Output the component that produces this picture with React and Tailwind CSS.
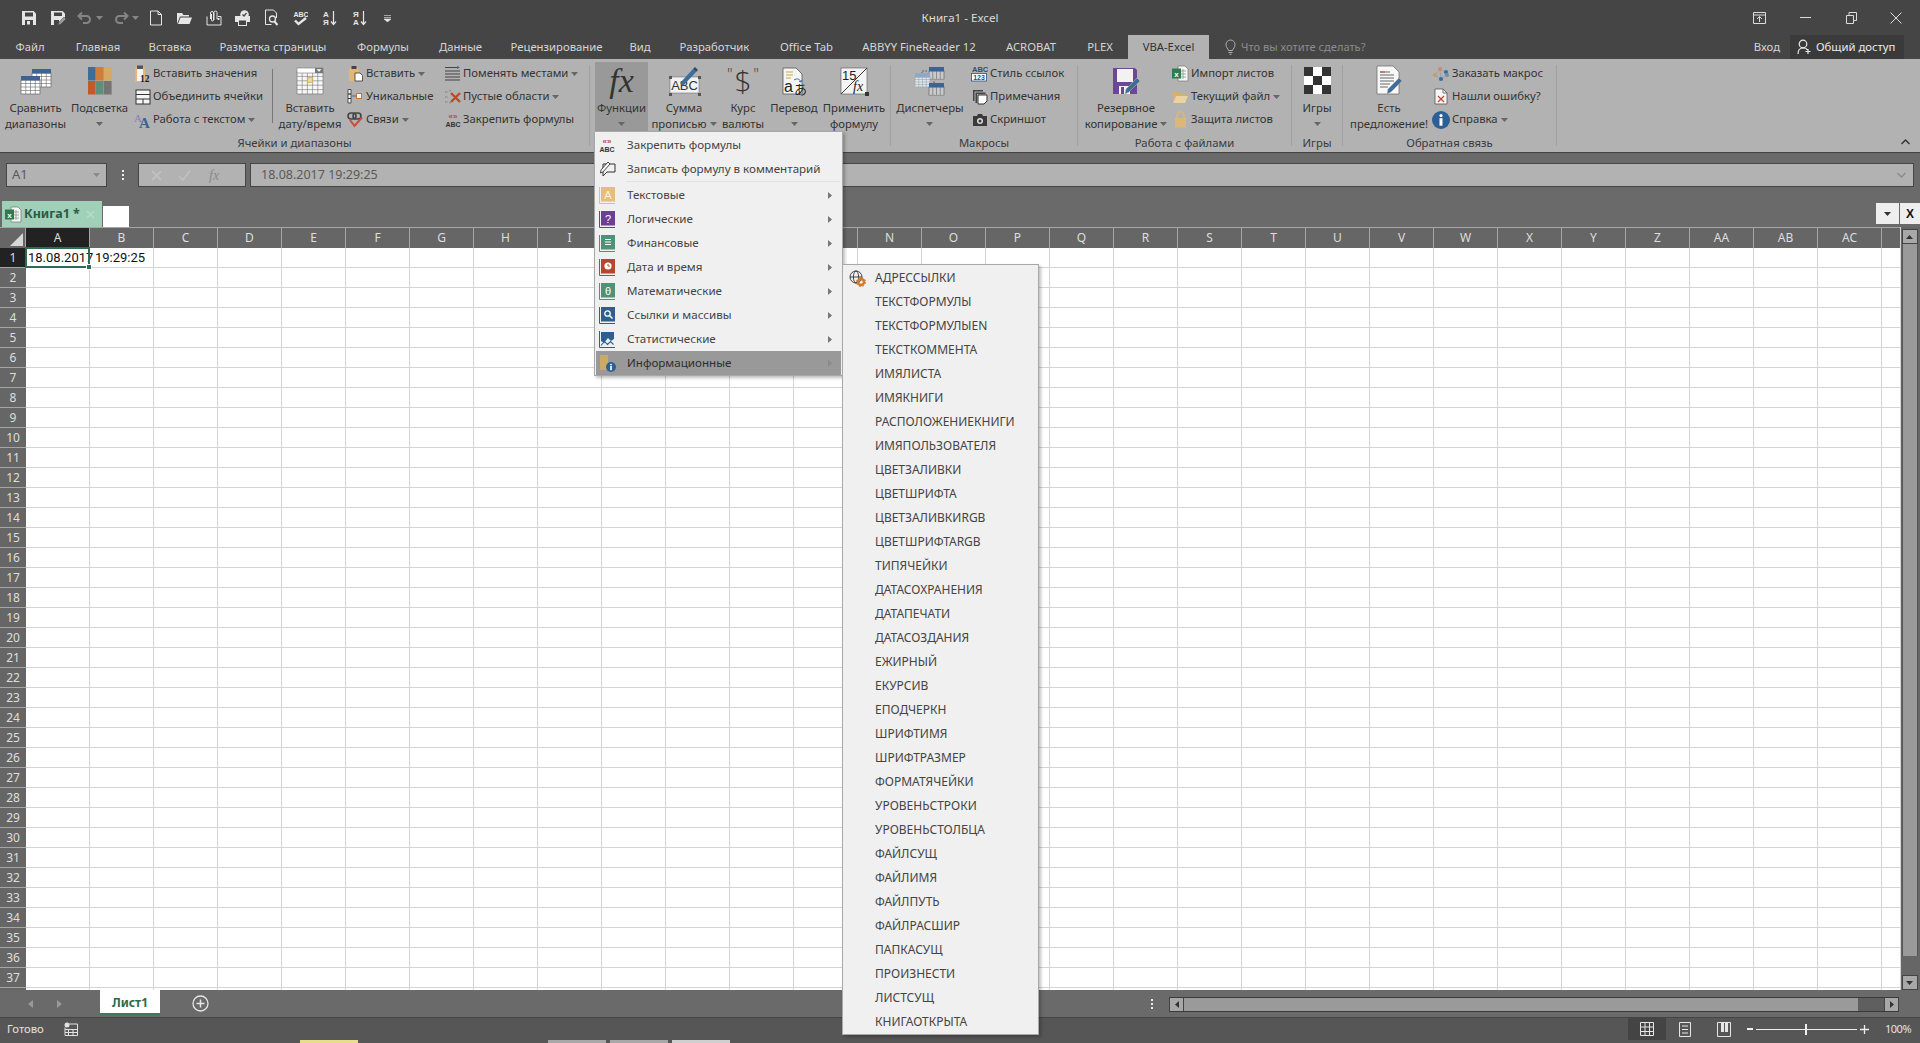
import React from "react";

const Svg = ({ w, h, children, className = "" }) => (
  <svg width={w} height={h} viewBox={`0 0 ${w} ${h}`} className={"block shrink-0 " + className}>{children}</svg>
);

const Caret = ({ c = "#666" }) => (
  <svg width="7" height="4" viewBox="0 0 7 4" className="inline-block shrink-0"><path d="M0 0h7L3.5 4z" fill={c} /></svg>
);

const Table = ({ x, y, w, h, cols = 4, rows = 4, head = "#3f6390", fill = "#fff", line = "#666" }) => {
  const cw = w / cols, rh = (h - 4) / rows;
  return (
    <g>
      <rect x={x} y={y + 4} width={w} height={h - 4} fill={fill} stroke={line} strokeWidth=".7" />
      <rect x={x} y={y} width={w} height={4.5} fill={head} />
      {Array.from({ length: cols - 1 }, (_, i) => <line key={i} x1={x + cw * (i + 1)} x2={x + cw * (i + 1)} y1={y + 4} y2={y + h} stroke={line} strokeWidth=".6" />)}
      {Array.from({ length: rows - 1 }, (_, i) => <line key={i} x1={x} x2={x + w} y1={y + 4 + rh * (i + 1)} y2={y + 4 + rh * (i + 1)} stroke={line} strokeWidth=".6" />)}
    </g>
  );
};

/* ---------- Quick access icons ---------- */
const W = "#e6e6e6";
const QSave = () => <Svg w={16} h={16}><path d="M1 1h11.5L15 3.5V15H1z" fill={W} /><rect x="4" y="2.5" width="8" height="4" fill="#454545" /><rect x="4" y="10" width="8" height="5" fill="#454545" /><rect x="6" y="11" width="3" height="3.5" fill={W} /></Svg>;
const QSaveAs = () => <Svg w={16} h={16}><path d="M1 1h11.5L15 3.5V8L8 15H1z" fill={W} /><rect x="4" y="2.5" width="8" height="3.5" fill="#454545" /><rect x="4" y="10" width="5" height="5" fill="#454545" /><path d="M8 15l1-3 5-5 2 2-5 5z" fill="#9a9a9a" stroke="#454545" strokeWidth=".5" /></Svg>;
const QUndo = ({ flip }) => <Svg w={16} h={14} className={flip ? "-scale-x-100" : ""}><path d="M5 1.5L1.5 5 5 8.5M2 5h7.5a3.5 3.5 0 0 1 0 7H6" fill="none" stroke="#858585" strokeWidth="2" /></Svg>;
const QNew = () => <Svg w={12} h={16}><path d="M.5 1h7.5l3.500 3.500V15H.5zM8 1v3.500h3.500" fill="none" stroke={W} /></Svg>;
const QOpen = () => <Svg w={17} h={14}><path d="M1 13V2h5l1.500 2H13v1.500H4L1 13zM4.500 6.500H16L13.500 13H2z" fill={W} /></Svg>;
const QAttach = () => <Svg w={16} h={16}><path d="M1 6.500V15h14V6.500h-3" fill="none" stroke={W} /><path d="M4.500 9V3a1.500 1.500 0 0 1 3 0v7a1 1 0 0 1-2 0V4M8 10V2.500a1.500 1.500 0 0 1 3 0V9" fill="none" stroke={W} /><rect x="11.500" y="8" width="2" height="2" fill={W} /></Svg>;
const QPrint = () => <Svg w={17} h={16}><rect x="1" y="6" width="15" height="6" fill={W} /><rect x="4.500" y="10" width="8" height="5.500" fill="#454545" stroke={W} /><circle cx="10.500" cy="4.500" r="4.300" fill={W} /><path d="M8.500 4.500l1.500 1.500 2.500-3" fill="none" stroke="#454545" strokeWidth="1.200" /></Svg>;
const QPreview = () => <Svg w={14} h={17}><path d="M.5 1h8l3 3v5M.5 1v14.500h6" fill="none" stroke={W} /><circle cx="7.500" cy="10" r="3" fill="none" stroke={W} strokeWidth="1.300" /><path d="M9.500 12.500l3 3.500" stroke={W} strokeWidth="2" /></Svg>;
const QAbc = () => <Svg w={15} h={16}><text x="0.5" y="6.500" fontSize="7" fontWeight="700" fill={W} fontFamily="Liberation Sans">ABC</text><path d="M2 10.500l3.500 3.500L13 8" fill="none" stroke={W} strokeWidth="2.400" /></Svg>;
const QSort = ({ a, b }) => <Svg w={14} h={16}><text x="0" y="7" fontSize="8" fill={W} fontFamily="Liberation Sans" fontWeight="700">{a}</text><text x="0" y="15" fontSize="8" fill={W} fontFamily="Liberation Sans" fontWeight="700">{b}</text><path d="M10.500 1v13M8 11.500l2.500 3 2.500-3" fill="none" stroke={W} strokeWidth="1.200" /></Svg>;

const Q = ({ className, children }) => <div className={"flex items-center justify-center gap-[3px] " + className}>{children}</div>;

/* ---------- Ribbon icons ---------- */
const ICompare = () => <Svg w={34} h={28}><Table x={13} y={2} w={19} h={18} /><Table x={2} y={9} w={19} h={18} /></Svg>;
const IPalette = () => (
  <Svg w={26} h={30}>
    {[["#3f6d9a", "#d17c38", "#d9a860"], ["#c4572b", "#5f9077", "#757575"]].map((r, j) => r.map((c, i) => <rect key={i + "-" + j} x={1 + i * 8} y={1 + j * 14} width={7.6} height={13.5} fill={c} />))}
  </Svg>
);
const ICalendar = () => (
  <Svg w={30} h={30}>
    <Table x={2} y={2} w={26} h={26} cols={5} rows={5} head="#f5f5f5" line="#777" fill="#f7f7f7" />
    <rect x="2" y="2" width="26" height="5" fill="#fff" stroke="#777" strokeWidth=".6" />
    <path d="M20 2h8v5h-8z" fill="#777" /><path d="M21.500 3.200h5l-2.500 2.500z" fill="#fff" />
    <rect x="12.400" y="11.500" width="5.200" height="5" fill="#f0d98a" stroke="#c9a94a" strokeWidth=".7" />
  </Svg>
);
const IClip12 = () => <Svg w={18} h={18}><rect x="1" y="2" width="10" height="15" rx="1" fill="#e2b675" /><rect x="3" y="0.5" width="6" height="3.500" fill="#555" /><rect x="3" y="4" width="6" height="12" fill="#f3f3f3" /><text x="6" y="16.500" fontSize="9.500" fontWeight="700" fill="#222" fontFamily="Liberation Serif">12</text></Svg>;
const IMerge = () => <Svg w={16} h={16}><rect x="1" y="1" width="14" height="14" fill="#f5f5f5" stroke="#333" /><path d="M1 5.500h14M1 10h14M8 10v5" stroke="#333" fill="none" /></Svg>;
const IAA = () => <Svg w={18} h={17}><text x="0" y="11" fontSize="11" fill="#8a7cc4" fontFamily="Liberation Serif">A</text><text x="5" y="16.500" fontSize="15" fontWeight="700" fill="#3a6596" fontFamily="Liberation Serif">A</text></Svg>;
const IPaste = () => <Svg w={16} h={17}><rect x="1" y="3" width="10" height="13" rx="1" fill="#e2b675" /><rect x="3.500" y="1" width="5" height="3" fill="#444" /><path d="M7 8h5l2.500 2.500V16H7z" fill="#fff" stroke="#333" strokeWidth=".8" /></Svg>;
const IUnique = () => <Svg w={17} h={15}><path d="M1 .5h3v4.500H1zM1 5h3v4.500H1zM1 9.500h3V14H1z" fill="#f3f3f3" stroke="#333" strokeWidth=".8" /><path d="M5 7h4" stroke="#3f6d9a" /><rect x="9.500" y="4.500" width="5" height="5" fill="#fff" stroke="#c0763a" /></Svg>;
const ILink = () => <Svg w={17} h={16}><rect x="1" y="1" width="8" height="6" rx="3" fill="none" stroke="#444" strokeWidth="1.600" /><rect x="6" y="1" width="8" height="6" rx="3" fill="none" stroke="#444" strokeWidth="1.600" /><path d="M3 8l4.500 6L15 5.500" fill="none" stroke="#c2503a" strokeWidth="2" /></Svg>;
const ISwap = () => <Svg w={17} h={16}><path d="M1 1.500h13M1 5h15M1 8h15M1 11h15M1 14h15" stroke="#444" strokeWidth="1" /><path d="M13 0l3 1.500-3 1.500z" fill="#3a6596" /></Svg>;
const IBlank = () => <Svg w={18} h={16}><path d="M1 3h3M1 8h3M1 13h3M6 1v2M6 13v2" stroke="#777" strokeDasharray="1.500 1" /><path d="M7 4l9 9M16 4l-9 9" stroke="#c2482a" strokeWidth="2.400" /></Svg>;
const IFormula = () => (
  <Svg w={16} h={16}>
    <text x="8" y="7" textAnchor="middle" fontSize="8" fontWeight="700" fill="#c04a30" fontFamily="Liberation Sans">«»</text>
    <text x="8" y="15" textAnchor="middle" fontSize="7" fontWeight="700" fill="#333" fontFamily="Liberation Sans">ABC</text>
  </Svg>
);
const IFx = () => <span className="font-['Liberation_Serif',serif] italic text-[34px] leading-[34px] text-[#333]">fx</span>;
const ISum = () => (
  <Svg w={34} h={30}>
    <rect x="3" y="11" width="29" height="16" fill="#f2f2f2" stroke="#666" strokeWidth=".5" />
    {[[2, 10], [31, 10], [2, 27], [31, 27]].map(([x, y], i) => <rect key={i} x={x} y={y} width="3" height="3" fill="#555" />)}
    <text x="17.500" y="24" textAnchor="middle" fontSize="13" fontFamily="Liberation Sans" fill="#333">ABC</text>
    <path d="M13 17L26 3l3 3-13 14z" fill="#3f6d9a" /><path d="M26 3l2-2 3 3-2 2z" fill="#2a4a70" />
  </Svg>
);
const IDollar = () => <span className="font-['Open_Sans',sans-serif] font-light text-[30px] leading-[30px] text-[#333] relative flex justify-center w-[32px]"><span className="absolute left-0 top-0 text-[16px] leading-[16px]">"</span>$<span className="absolute right-0 top-0 text-[16px] leading-[16px]">"</span></span>;
const ITranslate = () => (
  <Svg w={30} h={30}>
    <path d="M4 2h13l6 6v20H4z" fill="#f5f5f5" stroke="#555" strokeWidth=".8" />
    <path d="M7 6h7M7 9h7M7 12h5" stroke="#c9a94a" strokeWidth="1.100" />
    <text x="5" y="26" fontSize="16" fill="#222" fontFamily="Liberation Sans">a</text>
    <text x="15" y="28" fontSize="13" fill="#222" fontFamily="Noto Sans CJK JP">あ</text>
    <path d="M15 14c3-2 6-1 7 2M22 16l1-2M22 16l-2-.5" fill="none" stroke="#3f6d9a" />
  </Svg>
);
const IApply = () => (
  <Svg w={30} h={30}>
    <rect x="2" y="2" width="26" height="26" fill="#f4f4f4" stroke="#555" strokeWidth=".6" />
    <path d="M2 28L28 2" stroke="#333" strokeWidth="1" />
    <text x="3" y="14" fontSize="13" fill="#222" fontFamily="Liberation Sans">15</text>
    <text x="14" y="25" fontSize="14" fontStyle="italic" fill="#222" fontFamily="Liberation Serif">fx</text>
    <rect x="26" y="26" width="4" height="4" fill="#333" />
  </Svg>
);
const IManager = () => (
  <Svg w={32} h={30}>
    <path d="M13 5H8v10M20 15v10h-5" fill="none" stroke="#666" strokeDasharray="2 1" />
    <Table x={15} y={1} w={15} h={12} head="#3f6390" fill="#f5f5f5" />
    <Table x={1} y={7} w={15} h={14} head="#8fa8c8" fill="#dfe6ef" line="#9aa" />
    <Table x={15} y={17} w={15} h={12} head="#3f6390" fill="#f5f5f5" />
  </Svg>
);
const IStyleRef = () => (
  <Svg w={17} h={17}>
    <text x="1" y="7" fontSize="7.500" fontWeight="700" fill="#2e4f78" fontFamily="Liberation Sans">ABC</text>
    <rect x=".5" y="8.500" width="15" height="7.500" fill="#fff" stroke="#2e4f78" strokeWidth=".8" />
    <text x="8" y="15" textAnchor="middle" fontSize="7" fontWeight="700" fill="#2e4f78" fontFamily="Liberation Sans">123</text>
  </Svg>
);
const INotes = () => <Svg w={16} h={16}><path d="M1 1h10v1.500H2.500V12H1zM3.500 3.500h10V5H5v9H3.500z" fill="#444" /><path d="M6 6h9v6l-3 3H6z" fill="#fff" stroke="#333" /></Svg>;
const ICamera = () => <Svg w={16} h={14}><path d="M1 3h4l1-2h4l1 2h4v10H1z" fill="#3a3a3a" /><circle cx="8" cy="8" r="3" fill="#ddd" /><circle cx="8" cy="8" r="1.500" fill="#3a3a3a" /></Svg>;
const IBackup = () => (
  <Svg w={30} h={30}>
    <path d="M2 2h22l2 2v24H2z" fill="#6b4797" />
    <rect x="6" y="3" width="16" height="13" fill="#f2f2f2" />
    <path d="M8 28v-8h11v8z" fill="#f2f2f2" /><rect x="10" y="21" width="3" height="7" fill="#6b4797" />
    <path d="M14 28l1-5 11-11 3 3-11 11z" fill="#3f6d9a" stroke="#b2b2b2" strokeWidth=".6" />
  </Svg>
);
const IXls = () => <Svg w={17} h={17}><path d="M6 1h7l3 3v12H6z" fill="#f5f5f5" stroke="#777" strokeWidth=".7" /><path d="M8 6h6M8 9h6M8 12h6M11 4v10" stroke="#7f9f8f" strokeWidth=".8" /><rect x="0" y="3.500" width="9" height="10" fill="#2f7a4f" /><text x="4.500" y="12" textAnchor="middle" fontSize="8" fontWeight="700" fill="#fff" fontFamily="Liberation Sans">x</text></Svg>;
const IFolder = () => <Svg w={17} h={15}><path d="M1 14V3h5l1 2h7v2H4L1 14z" fill="#d9b06a" /><path d="M4 7h12l-3 7H1z" fill="#ecd29c" /></Svg>;
const ILock = () => <Svg w={15} h={17}><path d="M4 7V4.500a3.500 3.500 0 0 1 7 0V7" fill="none" stroke="#d9b878" strokeWidth="1.600" /><rect x="2" y="7" width="11" height="9.500" fill="#dcb878" /></Svg>;
const IGames = () => <Svg w={27} h={27}><rect width="27" height="27" fill="#fff" />{[[0, 0], [18, 0], [9, 9], [0, 18], [18, 18]].map(([x, y], i) => <rect key={i} x={x} y={y} width="9" height="9" fill="#333" />)}</Svg>;
const IDoc = () => (
  <Svg w={30} h={32}>
    <path d="M3 1h16l6 6v22H3z" fill="#f8f8f8" stroke="#666" strokeWidth=".7" />
    <path d="M6 7h10M6 10h14M6 13h14M6 16h14M6 19h10M6 22h8" stroke="#666" strokeWidth="1" />
    <path d="M6 7h5" stroke="#c2503a" strokeWidth="1" />
    <path d="M13 29l1-5 11-11 3 3-11 11z" fill="#3f6d9a" stroke="#b2b2b2" strokeWidth=".5" />
  </Svg>
);
const IOrder = () => (
  <Svg w={18} h={16}>
    <path d="M3 9L8 3l6 3M8 3l1 10M3 9l6 4 6-4M14 6l1 3" stroke="#8f9fb0" strokeWidth=".7" fill="none" />
    {[[3, 9, "#c2a06a"], [8, 3, "#d08a6a"], [14, 6, "#3f6d9a"], [9, 13, "#3f6d9a"], [15, 9, "#6f8fa8"]].map(([x, y, c], i) => <circle key={i} cx={x} cy={y} r="2.100" fill={c} />)}
  </Svg>
);
const IBug = () => <Svg w={14} h={17}><path d="M1 1h8l4 4v11H1z" fill="#f6f6f6" stroke="#555" strokeWidth=".8" /><path d="M9 1v4h4" fill="none" stroke="#555" strokeWidth=".8" /><path d="M4 8l6 6M10 8l-6 6" stroke="#c2482a" strokeWidth="1.300" /></Svg>;
const IInfo = ({ s = 18 }) => <svg width={s} height={s} viewBox="0 0 18 18" className="block shrink-0"><circle cx="9" cy="9" r="9" fill="#2d5f97" /><circle cx="9" cy="4.600" r="1.600" fill="#fff" /><rect x="7.500" y="7.200" width="3" height="7.500" fill="#fff" /></svg>;

/* ---------- Ribbon pieces ---------- */
const Large = ({ icon, lines, caret, className = "" }) => (
  <div className={"flex flex-col items-center shrink-0 " + className}>
    <div className="h-[37px] flex items-center justify-center">{icon}</div>
    <div className="pt-px text-center leading-[16px] whitespace-nowrap">
      {lines.map((l, i) => <div key={i} className="h-[16px] flex items-center justify-center gap-[3px]">{l}{caret && i === lines.length - 1 && <Caret />}</div>)}
      {lines.length === 1 && <div className="h-[16px] flex items-center justify-center"><Caret /></div>}
    </div>
  </div>
);
const SmallCol = ({ className = "", iconW = "w-[19px]", items }) => (
  <div className={"flex flex-col shrink-0 " + className}>
    {items.map(([ic, t, c], i) => (
      <div key={i} className="h-[23px] flex items-center whitespace-nowrap">
        <div className={"flex justify-center shrink-0 " + iconW}>{ic}</div>
        <span className="ml-[1px]">{t}</span>
        {c && <span className="ml-[3px] flex"><Caret /></span>}
      </div>
    ))}
  </div>
);
const Group = ({ className, label, children }) => (
  <div className={"flex shrink-0 h-full " + className}>
    <div className="flex-1 flex flex-col min-w-0">
      <div className="flex pt-[3px] h-[73px]">{children}</div>
      <div className="h-[20px] pt-[1px] text-center leading-[19px] text-[#3a3a3a]">{label}</div>
    </div>
    <div className="w-px my-[6px] bg-[#a0a0a0]" />
  </div>
);

/* ---------- Menu ---------- */
const Book = ({ c, children }) => (
  <Svg w={16} h={17}>
    <rect x="2" y="0" width="14" height="14.500" fill={c} />
    <path d="M.5 0v16.500H16" fill="none" stroke={c} strokeWidth="1" />
    {children}
  </Svg>
);
const mText = (t, fill = "#fff") => <text x="9" y="11.500" textAnchor="middle" fontSize="11" fill={fill} fontFamily="Liberation Sans">{t}</text>;
const menuTop = [
  [<IFormula />, "Закрепить формулы"],
  [<Svg w={17} h={16}><path d="M4 3h12v8H8l-4 4V3z" fill="none" stroke="#333" /><path d="M2 9L9 1l2 2-7 8-2.500 1z" fill="#f6f6f6" stroke="#333" strokeWidth=".9" /></Svg>, "Записать формулу в комментарий"],
];
const menuCat = [
  [<Book c="#e5bd7c">{mText("A", "#fff3dc")}</Book>, "Текстовые"],
  [<Book c="#6b3f96">{mText("?")}</Book>, "Логические"],
  [<Book c="#4f9278"><path d="M6 4.500h6M6 7h6M6 9.500h6" stroke="#fff" strokeWidth="1.200" /></Book>, "Финансовые"],
  [<Book c="#b5482a"><circle cx="9" cy="7" r="3.600" fill="#fff" /><path d="M9 5v2h1.800" stroke="#b5482a" fill="none" /></Book>, "Дата и время"],
  [<Book c="#4f9278">{mText("θ")}</Book>, "Математические"],
  [<Book c="#2f5f8f"><circle cx="8.500" cy="6.500" r="2.700" fill="none" stroke="#fff" strokeWidth="1.300" /><path d="M10.500 8.500l3 3" stroke="#fff" strokeWidth="1.500" /></Book>, "Ссылки и массивы"],
  [<Svg w={16} h={17}><path d="M.5 0v16.500H16" fill="none" stroke="#2f5f8f" /><path d="M2 1h13v7l-3 2-3-3-4 5-3-2z" fill="#2f5f8f" /><path d="M2 14.500l3.500-4 3 3 3-3 3 3" fill="none" stroke="#2f5f8f" strokeWidth="1.100" /></Svg>, "Статистические"],
];
const subItems = "АДРЕССЫЛКИ ТЕКСТФОРМУЛЫ ТЕКСТФОРМУЛЫEN ТЕКСТКОММЕНТА ИМЯЛИСТА ИМЯКНИГИ РАСПОЛОЖЕНИЕКНИГИ ИМЯПОЛЬЗОВАТЕЛЯ ЦВЕТЗАЛИВКИ ЦВЕТШРИФТА ЦВЕТЗАЛИВКИRGB ЦВЕТШРИФТАRGB ТИПЯЧЕЙКИ ДАТАСОХРАНЕНИЯ ДАТАПЕЧАТИ ДАТАСОЗДАНИЯ ЕЖИРНЫЙ ЕКУРСИВ ЕПОДЧЕРКН ШРИФТИМЯ ШРИФТРАЗМЕР ФОРМАТЯЧЕЙКИ УРОВЕНЬСТРОКИ УРОВЕНЬСТОЛБЦА ФАЙЛСУЩ ФАЙЛИМЯ ФАЙЛПУТЬ ФАЙЛРАСШИР ПАПКАСУЩ ПРОИЗНЕСТИ ЛИСТСУЩ КНИГАОТКРЫТА".split(" ");
const Arrow = ({ c = "#777" }) => <svg width="4" height="7" viewBox="0 0 4 7" className="block"><path d="M0 0l4 3.500L0 7z" fill={c} /></svg>;
const MenuRow = ({ icon, text, arrow, active }) => (
  <div className={"h-[24px] flex items-center mx-px " + (active ? "bg-[#999999]" : "")}>
    <div className="w-[22px] flex justify-center shrink-0">{icon}</div>
    <span className="ml-[9px] flex-1 whitespace-nowrap">{text}</span>
    {arrow && <span className="mr-[9px]"><Arrow c={active ? "#8a8a8a" : "#777"} /></span>}
  </div>
);

/* ---------- Grid ---------- */
const colNames = "A B C D E F G H I J K L M N O P Q R S T U V W X Y Z AA AB AC".split(" ");
const rowsN = Array.from({ length: 38 }, (_, i) => i + 1);

const Grid = () => (
  <div className="flex-1 min-w-0 flex flex-col overflow-hidden bg-white text-[12px]">
    <div className="flex h-[21px] shrink-0 bg-[#666666] border-t border-[#a6a6a6] text-[#dedede]">
      <div className="w-[26px] shrink-0 border-r border-[#a6a6a6] flex items-end justify-end pr-[2px] pb-[2px]">
        <svg width="13" height="13" viewBox="0 0 13 13"><path d="M13 0v13H0z" fill="#d8d8d8" /></svg>
      </div>
      {colNames.map((c, i) => (
        <div key={c} className={"w-[64px] shrink-0 flex items-center justify-center border-r border-[#a6a6a6] leading-none " + (i === 0 ? "bg-[#222222]" : "")}>{c}</div>
      ))}
      <div className="flex-1" />
    </div>
    {rowsN.map((r) => (
      <div key={r} className="flex h-[20px] shrink-0">
        <div className={"w-[26px] shrink-0 flex items-center justify-center border-b border-[#a6a6a6] text-[#dedede] " + (r === 1 ? "bg-[#222222]" : "bg-[#666666]")}>{r < 38 ? r : ""}</div>
        {colNames.map((c) => (
          <div key={c} className="w-[64px] shrink-0 border-r border-b border-[#d4d4d4] relative">
            {r === 1 && c === "A" && (
              <>
                <div className="absolute inset-y-0 left-[2px] flex items-center font-['Roboto',sans-serif] text-[13px] text-[#111] whitespace-nowrap">18.08.2017</div>
                <div className="absolute -left-px -top-px -right-px -bottom-px border-2 border-[#2f6a54]" />
                <div className="absolute -right-[3px] -bottom-[3px] w-[6px] h-[6px] bg-[#2f6a54] border border-white z-10" />
              </>
            )}
            {r === 1 && c === "B" && (
              <div className="absolute inset-y-0 left-[5px] flex items-center font-['Roboto',sans-serif] text-[13px] text-[#111]">19:29:25</div>
            )}
          </div>
        ))}
        <div className="flex-1 border-b border-[#d4d4d4]" />
      </div>
    ))}
  </div>
);

const GridViewIcon = () => <Svg w={14} h={14}><path d="M.5.5h13v13H.5zM.5 5h13M.5 9.500h13M5 .5v13M9.500.5v13" fill="none" stroke="#e6e6e6" /></Svg>;

export default function App() {
  return (
    <div className="relative w-[1920px] h-[1043px] overflow-hidden flex flex-col bg-[#565656] font-['Noto_Sans',sans-serif] text-[11.3px] text-[#333333]">
      {/* Title bar */}
      <div className="h-[35px] shrink-0 bg-[#454545] flex items-center relative">
        <Q className="ml-[14px] w-[29px]"><QSave /></Q>
        <Q className="w-[29px]"><QSaveAs /></Q>
        <Q className="w-[36px]"><QUndo /><Caret c="#858585" /></Q>
        <Q className="w-[36px]"><QUndo flip /><Caret c="#858585" /></Q>
        <Q className="w-[28px] -ml-[2px]"><QNew /></Q>
        <Q className="w-[29px]"><QOpen /></Q>
        <Q className="w-[29px]"><QAttach /></Q>
        <Q className="w-[29px]"><QPrint /></Q>
        <Q className="w-[29px]"><QPreview /></Q>
        <Q className="w-[29px]"><QAbc /></Q>
        <Q className="w-[30px]"><QSort a="А" b="Я" /></Q>
        <Q className="w-[29px]"><QSort a="Я" b="А" /></Q>
        <Q className="w-[26px]">
          <svg width="7" height="8" viewBox="0 0 7 8"><path d="M0 1.500h7M0 3.500h7M0 5l3.500 3L7 5z" stroke="#e6e6e6" fill="#e6e6e6" strokeWidth=".6" /></svg>
        </Q>
        <div className="absolute left-0 right-0 top-[10px] text-center text-[#dcdcdc] pointer-events-none leading-[15px] text-[11.6px]">Книга1 - Excel</div>
        <div className="ml-auto flex items-center text-[#dcdcdc]">
          <div className="w-[46px] flex justify-center"><Svg w={13} h={12}><path d="M.5.5h12v11H.5zM.5 3h12M4 7l2.500-2.500L9 7M6.500 4.500V10" fill="none" stroke="#dcdcdc" /></Svg></div>
          <div className="w-[46px] flex justify-center"><Svg w={11} h={11}><path d="M0 5.500h11" stroke="#dcdcdc" /></Svg></div>
          <div className="w-[46px] flex justify-center"><Svg w={11} h={12}><path d="M.5 3.500h7v8h-7zM3 3.500V.5h7.500v8h-3" fill="none" stroke="#dcdcdc" /></Svg></div>
          <div className="w-[46px] flex justify-center pr-[2px]"><Svg w={12} h={12}><path d="M.5.5l11 11M11.500.5L.5 11.500" stroke="#dcdcdc" /></Svg></div>
        </div>
      </div>

      {/* Tabs */}
      <div className="h-[24px] shrink-0 bg-[#454545] flex items-center text-[#d6d6d6]">
        {[["Файл", "w-[60px]"], ["Главная", "w-[76px]"], ["Вставка", "w-[68px]"], ["Разметка страницы", "w-[138px]"], ["Формулы", "w-[82px]"], ["Данные", "w-[73px]"], ["Рецензирование", "w-[119px]"], ["Вид", "w-[48px]"], ["Разработчик", "w-[101px]"], ["Office Tab", "w-[83px]"], ["ABBYY FineReader 12", "w-[142px]"], ["ACROBAT", "w-[82px]"], ["PLEX", "w-[56px]"]].map(([t, w]) => (
          <div key={t} className={"text-center shrink-0 whitespace-nowrap " + w}>{t}</div>
        ))}
        <div className="w-[81px] h-full shrink-0 bg-[#b2b2b2] text-[#333] flex items-center justify-center">VBA-Excel</div>
        <div className="ml-[16px] flex items-center gap-[5px] text-[#8c8c8c] text-[11.1px]">
          <svg width="11" height="16" viewBox="0 0 11 16"><path d="M3.500 11.500C3 9.500 1 8.500 1 5.500a4.500 4.500 0 0 1 9 0c0 3-2 4-2.500 6zM3.500 13.500h4M4.500 15.300h2" fill="none" stroke="#b0b0b0" /></svg>
          Что вы хотите сделать?
        </div>
        <div className="ml-auto text-[#d6d6d6] mr-[10px]">Вход</div>
        <div className="w-[114px] mr-[16px] h-full bg-[#3a3a3a] flex items-center pl-[7px] gap-[5px] text-[#ececec]">
          <svg width="14" height="16" viewBox="0 0 14 16"><circle cx="6" cy="5" r="3.800" fill="none" stroke="#ececec" strokeWidth="1.200" /><path d="M1 15c0-4 2-6 5-6s4 1 4 2M11 10v5M8.500 12.500h5" fill="none" stroke="#ececec" strokeWidth="1.200" /></svg>
          Общий доступ
        </div>
      </div>

      {/* Ribbon */}
      <div className="h-[93px] shrink-0 bg-[#b2b2b2] flex relative">
        <Group className="w-[590px]" label="Ячейки и диапазоны">
          <Large className="ml-[5px] w-[61px]" icon={<ICompare />} lines={["Сравнить", "диапазоны"]} />
          <Large className="ml-[5px] w-[57px]" icon={<IPalette />} lines={["Подсветка"]} />
          <SmallCol className="ml-[6px] w-[138px]" iconW="w-[18px]" items={[[<IClip12 />, "Вставить значения"], [<IMerge />, "Объединить ячейки"], [<IAA />, "Работа с текстом", true]]} />
          <div className="w-px h-[54px] mt-[7px] bg-[#777777] shrink-0" />
          <Large className="ml-[6px] w-[62px]" icon={<ICalendar />} lines={["Вставить", "дату/время"]} />
          <SmallCol className="ml-[5px] w-[97px]" items={[[<IPaste />, "Вставить", true], [<IUnique />, "Уникальные"], [<ILink />, "Связи", true]]} />
          <SmallCol items={[[<ISwap />, "Поменять местами", true], [<IBlank />, "Пустые области", true], [<IFormula />, "Закрепить формулы"]]} />
        </Group>
        <Group className="w-[301px]" label="">
          <div className="ml-[5px] w-[53px] h-[70px] bg-[#999999] shrink-0">
            <Large icon={<IFx />} lines={["Функции"]} />
          </div>
          <Large className="w-[72px]" icon={<ISum />} lines={["Сумма", "прописью"]} caret />
          <Large className="w-[46px]" icon={<IDollar />} lines={["Курс", "валюты"]} />
          <Large className="w-[54px] ml-[1px]" icon={<ITranslate />} lines={["Перевод"]} />
          <Large className="w-[66px]" icon={<IApply />} lines={["Применить", "формулу"]} />
        </Group>
        <Group className="w-[187px]" label="Макросы">
          <Large className="ml-[5px] w-[68px]" icon={<IManager />} lines={["Диспетчеры"]} />
          <SmallCol className="ml-[6px]" items={[[<IStyleRef />, "Стиль ссылок"], [<INotes />, "Примечания"], [<ICamera />, "Скриншот"]]} />
        </Group>
        <Group className="w-[214px]" label="Работа с файлами">
          <Large className="ml-[7px] w-[82px]" icon={<IBackup />} lines={["Резервное", "копирование"]} caret />
          <SmallCol className="ml-[3px]" iconW="w-[20px]" items={[[<IXls />, "Импорт листов"], [<IFolder />, "Текущий файл", true], [<ILock />, "Защита листов"]]} />
        </Group>
        <Group className="w-[51px]" label="Игры">
          <Large className="w-[50px]" icon={<IGames />} lines={["Игры"]} />
        </Group>
        <Group className="w-[214px]" label="Обратная связь">
          <Large className="ml-[7px] w-[78px]" icon={<IDoc />} lines={["Есть", "предложение!"]} />
          <SmallCol className="ml-[3px]" iconW="w-[20px]" items={[[<IOrder />, "Заказать макрос"], [<IBug />, "Нашли ошибку?"], [<IInfo />, "Справка", true]]} />
        </Group>
        <div className="absolute right-[10px] bottom-[7px]">
          <svg width="9" height="6" viewBox="0 0 9 6"><path d="M.5 5l4-4 4 4" fill="none" stroke="#333" strokeWidth="1.400" /></svg>
        </div>
      </div>

      {/* Formula bar + workbook tabs */}
      <div className="h-[75px] shrink-0 bg-[#6a6a6a] flex flex-col border-t border-[#454545]">
        <div className="flex h-[24px] mt-[10px] shrink-0 text-[#5a5a5a]">
          <div className="ml-[6px] w-[101px] bg-[#b2b2b2] border border-[#454545] flex items-center pl-[5px] pr-[6px] justify-between text-[13px]">
            A1 <Caret c="#8a8a8a" />
          </div>
          <div className="w-[31px] flex flex-col items-center justify-center gap-[2px]">
            <i className="w-[2px] h-[2px] bg-[#eee]" /><i className="w-[2px] h-[2px] bg-[#eee]" /><i className="w-[2px] h-[2px] bg-[#eee]" />
          </div>
          <div className="w-[108px] bg-[#b2b2b2] border border-[#454545] flex items-center pl-[12px] gap-[16px]">
            <Svg w={11} h={11}><path d="M1 1l9 9M10 1l-9 9" stroke="#c2c2c2" strokeWidth="1.600" /></Svg>
            <Svg w={13} h={11}><path d="M1 6l4 4 7-9" fill="none" stroke="#c2c2c2" strokeWidth="1.600" /></Svg>
            <span className="font-['Liberation_Serif',serif] italic text-[14px] text-[#8a8a8a] ml-[2px]">fx</span>
          </div>
          <div className="ml-[4px] w-[1664px] bg-[#b2b2b2] border border-[#454545] flex items-center pl-[10px] pr-[7px] justify-between text-[12.5px]">
            18.08.2017 19:29:25
            <svg width="9" height="6" viewBox="0 0 9 6"><path d="M.5 1l4 4 4-4" fill="none" stroke="#8a8a8a" strokeWidth="1.300" /></svg>
          </div>
        </div>
        <div className="flex items-end mt-auto h-[26px]">
          <div className="ml-[2px] w-[100px] h-[26px] bg-[#a0d0b8] flex items-center pl-[3px] text-[#2d5a44] font-bold text-[12.5px]">
            <IXls />
            <span className="ml-[2px] whitespace-nowrap">Книга1 *</span>
            <Svg w={9} h={9} className="ml-[6px]"><path d="M1 1l7 7M8 1l-7 7" stroke="#b8dcca" strokeWidth="1.500" /></Svg>
          </div>
          <div className="ml-[1px] w-[26px] h-[21px] bg-white" />
          <div className="ml-auto flex gap-[1px] mb-[3px]">
            <div className="w-[23px] h-[21px] bg-[#eeeeee] flex items-center justify-center"><Caret c="#333" /></div>
            <div className="w-[20px] h-[21px] bg-[#eeeeee] flex items-center justify-center font-bold text-[#111] text-[12px] leading-none font-['Liberation_Sans',sans-serif]">X</div>
          </div>
        </div>
      </div>

      {/* Sheet + scrollbar */}
      <div className="h-[763px] shrink-0 flex">
        <Grid />
        <div className="w-[20px] shrink-0 bg-[#666666] flex flex-col items-center border-l border-[#d4d4d4] pr-[2px]">
          <div className="w-[16px] h-[15px] mt-[2px] bg-[#a8a8a8] border border-[#444] flex items-center justify-center"><svg width="7" height="4" viewBox="0 0 7 4"><path d="M0 4h7L3.500 0z" fill="#333" /></svg></div>
          <div className="w-[16px] h-[712px] bg-[#9a9a9a] border-x border-[#555]" />
          <div className="flex-1" />
          <div className="w-[16px] h-[15px] bg-[#a8a8a8] border border-[#444] flex items-center justify-center"><Caret c="#333" /></div>
        </div>
      </div>

      {/* Sheet tabs */}
      <div className="h-[28px] shrink-0 bg-[#6a6a6a] flex items-start border-b border-[#444444]">
        <div className="w-[100px] h-full flex items-center pl-[28px] gap-[24px] shrink-0">
          <svg width="5" height="8" viewBox="0 0 5 8"><path d="M5 0L0 4l5 4z" fill="#999" /></svg>
          <svg width="5" height="8" viewBox="0 0 5 8"><path d="M0 0l5 4-5 4z" fill="#999" /></svg>
        </div>
        <div className="w-[60px] h-[25px] bg-white border-b-2 border-[#3c7a5a] pt-[2px] flex items-center justify-center text-[#2d6a4a] font-bold text-[12px] shrink-0">Лист1</div>
        <div className="ml-[32px] h-full flex items-center">
          <svg width="17" height="17" viewBox="0 0 17 17"><circle cx="8.500" cy="8.500" r="7.500" fill="none" stroke="#e6e6e6" strokeWidth="1.300" /><path d="M8.500 4.500v8M4.500 8.500h8" stroke="#e6e6e6" strokeWidth="1.500" /></svg>
        </div>
        <div className="ml-[942px] h-full w-[2px] flex flex-col items-center justify-center gap-[2px] shrink-0">
          <i className="w-[2px] h-[2px] bg-[#eee]" /><i className="w-[2px] h-[2px] bg-[#eee]" /><i className="w-[2px] h-[2px] bg-[#eee]" />
        </div>
        <div className="ml-[16px] w-[730px] h-[15px] mt-[7px] flex border-y border-[#3a3a3a] shrink-0">
          <div className="w-[15px] bg-[#a8a8a8] border-x border-[#444] flex items-center justify-center"><svg width="4" height="7" viewBox="0 0 4 7"><path d="M4 0L0 3.500 4 7z" fill="#333" /></svg></div>
          <div className="w-[674px] bg-[#9a9a9a]" />
          <div className="flex-1 bg-[#5f5f5f]" />
          <div className="w-[15px] bg-[#a8a8a8] border-x border-[#444] flex items-center justify-center"><Arrow c="#333" /></div>
        </div>
      </div>

      {/* Status bar */}
      <div className="h-[22px] shrink-0 bg-[#565656] flex items-center text-[#e2e2e2]">
        <span className="ml-[7px] w-[57px]">Готово</span>
        <Svg w={14} h={14}><circle cx="3" cy="3" r="2.500" fill="#e2e2e2" /><path d="M5 2h8.500v11.500H1V5.500M1 7.500h12.500M1 10.500h12.500M4.500 7.500v6M9 7.500v6" fill="none" stroke="#e2e2e2" /></Svg>
        <div className="ml-auto w-[38px] h-full bg-[#444444] flex items-center justify-center"><GridViewIcon /></div>
        <div className="w-[38px] flex justify-center"><Svg w={12} h={15}><path d="M.5.5h11v14H.5zM3 4h6M3 7.500h6M3 11h6" fill="none" stroke="#e6e6e6" /></Svg></div>
        <div className="w-[39px] flex justify-center"><Svg w={14} h={15}><path d="M.5.5h13v14H.5z" fill="none" stroke="#e6e6e6" /><path d="M4 1h3v9H4zM8 1h3v9H8z" fill="#e6e6e6" /></Svg></div>
        <div className="ml-[4px] flex items-center w-[123px]">
          <i className="w-[6px] h-[2px] bg-[#eee]" />
          <div className="relative ml-[3px] w-[101px] h-px bg-[#eee]"><i className="absolute left-[49px] -top-[5px] w-[2px] h-[11px] bg-[#eee]" /></div>
          <svg width="9" height="9" viewBox="0 0 9 9" className="ml-[3px]"><path d="M4.500 0v9M0 4.500h9" stroke="#eee" strokeWidth="1.300" /></svg>
        </div>
        <span className="w-[35px] ml-[15px] text-[11px] tracking-[-0.5px]">100%</span>
      </div>

      {/* Bottom edge: windows peeking below the status bar */}
      <div className="h-[3px] shrink-0 bg-[#565656] flex items-stretch">
        <div className="ml-[300px] w-[58px] bg-[#e8dd8a]" />
        <div className="ml-[190px] w-[58px] bg-[#a8a8a8]" />
        <div className="ml-[4px] w-[58px] bg-[#a8a8a8]" />
        <div className="ml-[4px] w-[58px] bg-[#cfcfcf]" />
      </div>

      {/* Functions menu */}
      <div className="absolute left-[594px] top-[131px] w-[249px] h-[245px] bg-[#f0f0f0] border border-[#a8a8a8] pt-px text-[#444444] text-[11.6px] shadow-[2px_2px_3px_rgba(0,0,0,0.25)] z-20">
        {menuTop.map(([ic, t]) => <MenuRow key={t} icon={ic} text={t} />)}
        <div className="h-[2px] ml-[31px] mr-[2px] border-t border-[#e2e2e2]" />
        {menuCat.map(([ic, t]) => <MenuRow key={t} icon={ic} text={t} arrow />)}
        <MenuRow
          active
          arrow
          text={<span className="text-[#2e2e2e]">Информационные</span>}
          icon={
            <div className="relative w-[17px] h-[17px]">
              <Svg w={16} h={16}><path d="M1 0h8v15H1z" fill="#cda964" /></Svg>
              <div className="absolute right-0 bottom-0"><IInfo s={10} /></div>
            </div>
          }
        />
      </div>

      {/* Information submenu */}
      <div className="absolute left-[842px] top-[264px] w-[197px] h-[771px] bg-[#f0f0f0] border border-[#a8a8a8] pt-px text-[#444444] text-[12px] shadow-[2px_2px_3px_rgba(0,0,0,0.25)] z-30">
        {subItems.map((t, i) => (
          <div key={t} className="h-[24px] flex items-center">
            <div className="w-[32px] shrink-0 flex justify-center pr-[3px]">
              {i === 0 && (
                <Svg w={17} h={17}>
                  <circle cx="7" cy="7" r="6" fill="none" stroke="#333" strokeWidth=".9" />
                  <ellipse cx="7" cy="7" rx="2.600" ry="6" fill="none" stroke="#333" strokeWidth=".9" />
                  <path d="M1 7h12" stroke="#333" strokeWidth=".9" />
                  <circle cx="12" cy="12" r="3" fill="none" stroke="#d07a2a" strokeWidth="2.400" />
                  <circle cx="12" cy="12" r="4.600" fill="none" stroke="#d07a2a" strokeWidth="1" strokeDasharray="1.800 1.800" />
                </Svg>
              )}
            </div>
            <span className="whitespace-nowrap">{t}</span>
          </div>
        ))}
      </div>
    </div>
  );
}
